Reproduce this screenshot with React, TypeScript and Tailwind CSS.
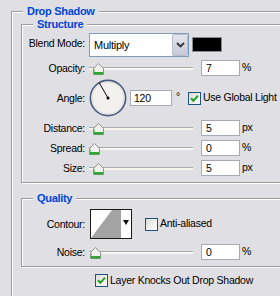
import type { ReactNode } from 'react'
import clsx from 'clsx'

const BG = 'bg-[#e0dfe3]'

function Group({ title, className, children }: { title: string; className?: string; children: ReactNode }) {
  return (
    <div
      className={clsx(
        'relative border border-[#9d9da1] shadow-[1px_1px_0_#fff,inset_1px_1px_0_#fff]',
        className,
      )}
    >
      <span
        className={clsx(
          'absolute -top-[7px] left-[11px] px-1 font-bold text-[11px] tracking-[-0.3px] text-[#0046d5] leading-[13px]',
          BG,
        )}
      >
        {title}
      </span>
      {children}
    </div>
  )
}

function Label({ children, className }: { children: ReactNode; className?: string }) {
  return <span className={clsx('w-[63px] shrink-0 mr-[4px] text-right leading-[13px]', className)}>{children}</span>
}

function Thumb({ left }: { left: number }) {
  return (
    <svg width="11" height="12" viewBox="0 0 11 12" className="absolute top-[3px]" style={{ left }}>
      <path d="M5.5 0.5 L10.5 5.5 V11.5 H0.5 V5.5 Z" fill="#f1f1ee" stroke="#8f8f8f" />
      <rect x="1" y="9" width="9" height="2.5" fill="#2fa82f" />
      <path d="M1.5 6 V9" stroke="#8fd48f" />
    </svg>
  )
}

function Slider({ pos }: { pos: number }) {
  return (
    <div className="relative w-[104px] h-[16px] shrink-0">
      <div className="mt-[7px] h-[3px] border-t border-[#a9a8ad] bg-[#f6f5ee]" />
      <Thumb left={pos} />
    </div>
  )
}

function Field({ value, className }: { value: string; className?: string }) {
  return (
    <div className={clsx('h-[16px] border border-[#a5acb5] bg-white leading-[14px] shrink-0', className)}>{value}</div>
  )
}

function Check({ checked }: { checked?: boolean }) {
  return (
    <div className="w-[13px] h-[13px] shrink-0 border border-[#1c5180] bg-gradient-to-br from-[#dcdcd7] to-white flex items-center justify-center">
      {checked && (
        <svg width="9" height="9" viewBox="0 0 9 9">
          <path d="M1 4.2 L3.4 6.8 L8 1.6" fill="none" stroke="#21a121" strokeWidth="2" />
        </svg>
      )}
    </div>
  )
}

const sliders = [
  { label: 'Distance:', value: '5', unit: 'px', pos: 4, gap: 'mt-[3px]' },
  { label: 'Spread:', value: '0', unit: '%', pos: 0, gap: 'mt-[4px]' },
  { label: 'Size:', value: '5', unit: 'px', pos: 4, gap: 'mt-[4px]' },
]

export default function App() {
  return (
    <div
      className={clsx(
        'w-[280px] h-[296px] overflow-hidden pl-[11px] pt-[11px] text-[10.5px] tracking-[-0.25px] text-black font-["Liberation_Sans",Arial,sans-serif]',
        BG,
      )}
    >
      <Group title="Drop Shadow" className="w-[300px] pb-[20px]">
        <Group title="Structure" className="ml-[9px] mt-[12px] w-[300px] pb-[6px]">
          {/* Blend mode */}
          <div className="mt-[8px] flex items-start">
            <Label className="pt-[4px]">Blend Mode:</Label>
            <div className="w-[100px] h-[24px] border border-[#7f9db9] bg-white flex items-center">
              <span className="flex-1 pl-[4px] text-[11px]">Multiply</span>
              <div className="w-[16px] h-[22px] rounded-[2px] border border-[#b9bdcc] bg-gradient-to-b from-[#e4e6ee] to-[#c6c9d8] flex items-center justify-center">
                <svg width="9" height="6" viewBox="0 0 9 6">
                  <path d="M1 1 L4.5 4.5 L8 1" fill="none" stroke="#333" strokeWidth="1.8" />
                </svg>
              </div>
            </div>
            <div className="ml-[3px] mt-[4px] w-[30px] h-[15px] border border-[#8c8c8c] bg-black" />
          </div>

          {/* Opacity */}
          <div className="mt-[3px] flex items-center">
            <Label>Opacity:</Label>
            <Slider pos={4} />
            <Field value="7" className="ml-[8px] w-[39px] pl-[4px]" />
            <span className="ml-[2px]">%</span>
          </div>

          {/* Angle */}
          <div className="mt-[3px] flex items-center">
            <Label>Angle:</Label>
            <svg width="38" height="38" viewBox="0 0 38 38" className="shrink-0">
              <circle cx="19" cy="19" r="17.6" fill="#f2f1ef" stroke="#4a5a7e" strokeWidth="1.6" />
              <circle cx="19" cy="19" r="16" fill="none" stroke="#dddcd8" strokeWidth="1" />
              <line x1="19" y1="19" x2="10.3" y2="3.9" stroke="#000" strokeWidth="1" />
              <circle cx="19" cy="19" r="1.5" fill="#000" />
            </svg>
            <Field value="120" className="ml-[3px] w-[42px] pl-[3px]" />
            <span className="self-start mt-[11px] ml-[4px] leading-[13px]">°</span>
            <div className="ml-[8px]">
              <Check checked />
            </div>
            <span className="ml-[2px]">Use Global Light</span>
          </div>

          {sliders.map((s) => (
            <div key={s.label} className={clsx('flex items-center', s.gap)}>
              <Label>{s.label}</Label>
              <Slider pos={s.pos} />
              <Field value={s.value} className="ml-[8px] w-[39px] pl-[4px]" />
              <span className="ml-[2px]">{s.unit}</span>
            </div>
          ))}
        </Group>

        <Group title="Quality" className="ml-[9px] mt-[15px] w-[300px] pb-[6px]">
          {/* Contour */}
          <div className="mt-[10px] flex items-center">
            <Label>Contour:</Label>
            <svg width="42" height="30" viewBox="0 0 42 30" className="ml-[1px] shrink-0">
              <rect x="0.5" y="0.5" width="41" height="29" fill="#fff" stroke="#1a1a1a" />
              <polygon points="1,29 22,1 31,1 31,29" fill="#a4a4a4" />
              <polygon points="33,11 39,11 36,16" fill="#111" />
            </svg>
            <div className="ml-[13px]">
              <Check />
            </div>
            <span className="ml-[2px]">Anti-aliased</span>
          </div>

          {/* Noise */}
          <div className="mt-[5px] flex items-center">
            <Label>Noise:</Label>
            <Slider pos={1} />
            <Field value="0" className="ml-[8px] w-[39px] pl-[4px]" />
            <span className="ml-[2px]">%</span>
          </div>
        </Group>

        <div className="ml-[83px] mt-[6px] flex items-center">
          <Check checked />
          <span className="ml-[2px]">Layer Knocks Out Drop Shadow</span>
        </div>
      </Group>
    </div>
  )
}
